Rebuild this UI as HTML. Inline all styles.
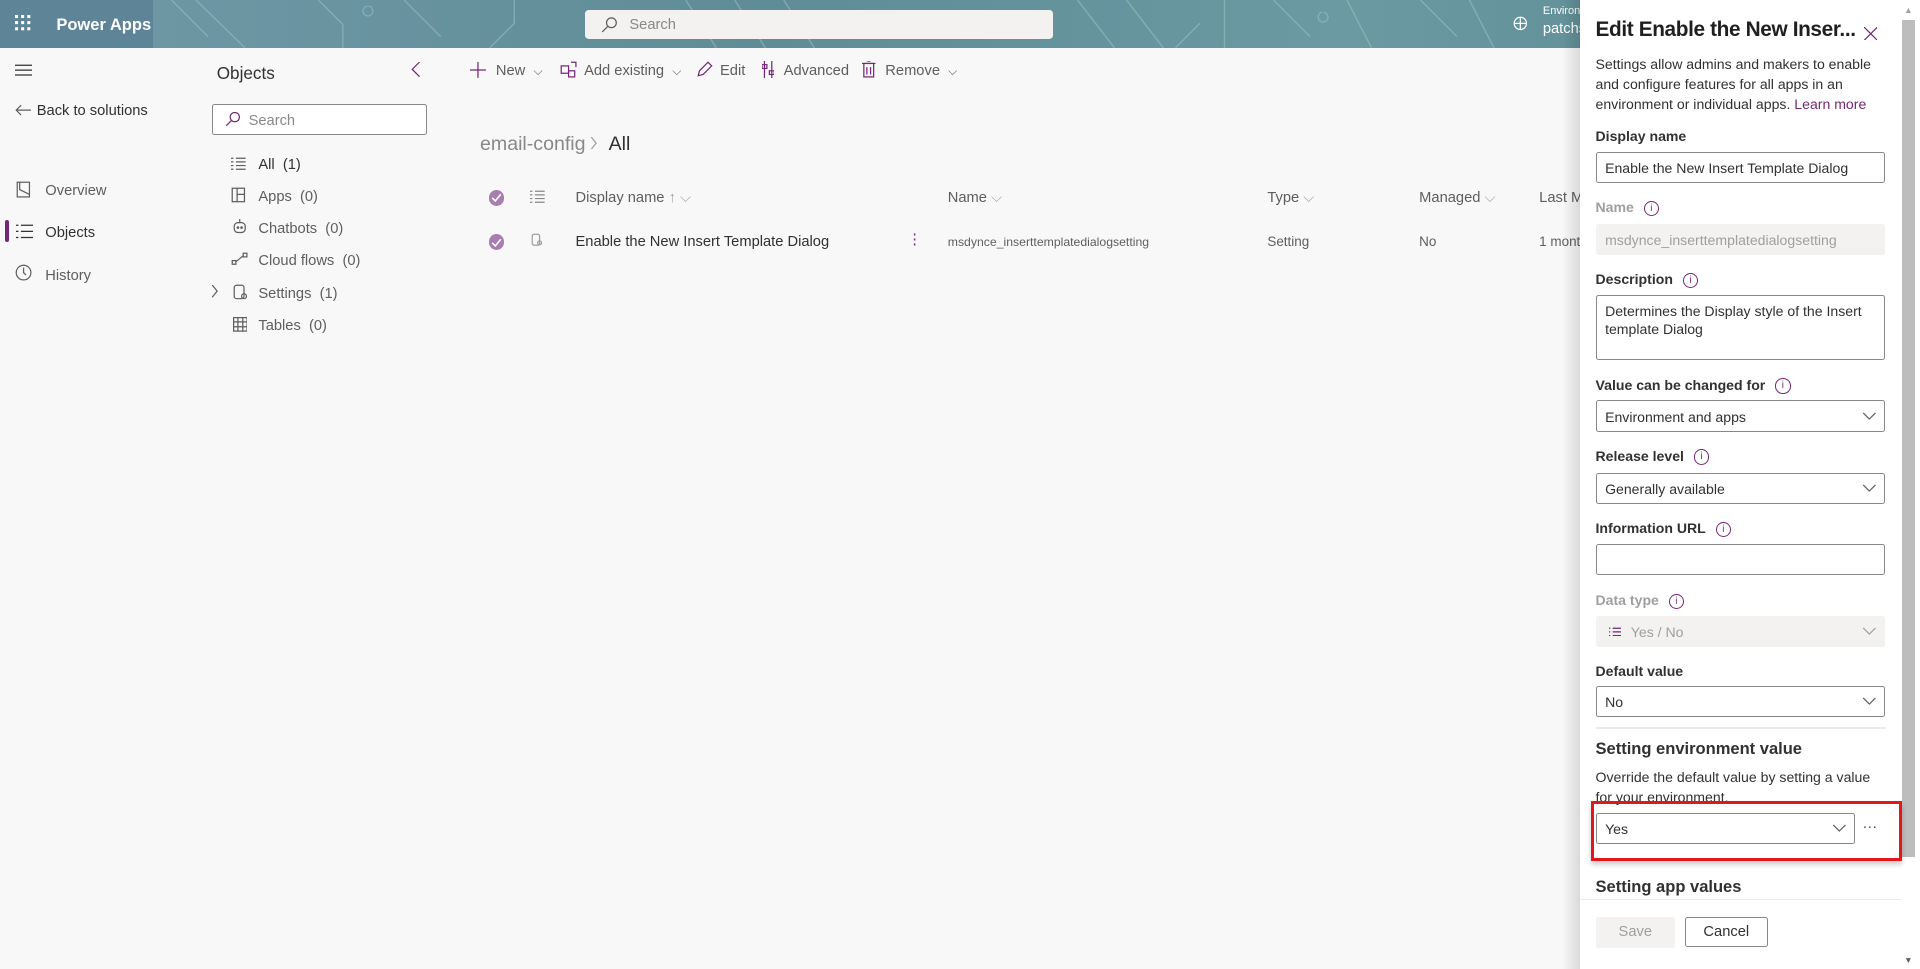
<!DOCTYPE html>
<html><head><meta charset="utf-8"><style>
html,body{margin:0;padding:0;overflow:hidden;background:#f8f8f8}
#root{zoom:1.22449;width:1568px;height:791px;position:relative;font-family:"Segoe UI","Liberation Sans",sans-serif;color:#323130;font-size:12px;background:#f8f8f8;overflow:hidden}
.a{position:absolute;white-space:nowrap}
.t{margin-top:1.5px}
.top{position:absolute;left:0;top:0;width:1568px;height:39px;background:linear-gradient(90deg,#5d8497 0,#5d8497 125px,#6e97a4 125px,#5e8c97 40%,#6b9aa2 70%,#5a8690 100%)}
.lbl{font-weight:600;font-size:11.5px;color:#323130;margin-top:1.5px}
.box{position:absolute;left:1303px;width:235px;border:1px solid #8a8886;background:#fff;border-radius:2px;height:24px}
.box span{position:absolute;left:7px;top:6px;font-size:11.5px}
.chev{position:absolute;right:6px;top:5px;width:12px;height:12px}
.info{display:inline-block;width:11px;height:11px;border:1px solid #742774;border-radius:50%;font-size:8px;line-height:11px;text-align:center;color:#742774;margin-left:8px;vertical-align:1px;font-weight:400}
.nav{color:#605e5c;font-size:12px;margin-top:1.5px}
.chk{position:absolute;width:13px;height:13px;border-radius:50%;background:#a87db0}
.th{position:absolute;top:155px;color:#605e5c;font-size:12px}
.td{position:absolute;top:191px;color:#605e5c;font-size:11px}
</style></head><body><div id="root">
<div class="top">
<svg class="a" style="left:0;top:0" width="1568" height="39"><g stroke="#9dc0c4" stroke-width="1.2" fill="none" opacity=".55">
<path d="M140 0 L170 30 M160 0 L200 39 M260 0 l20 20 v19 M300 5 a4 4 0 1 0 1 0 M330 0 l30 30 M400 39 l20-20 v-19 M560 0 l25 39 M600 0 l25 39 M640 0 l25 39 M880 0 l30 39 M920 0 l30 39 M960 39 l20-20 M1000 0 v39 M1040 0 l30 30 M1080 10 a4 4 0 1 0 1 0 M1100 0 l20 39 M1160 0 l30 30 M1200 0 l20 39"/></g></svg>
<svg class="a" style="left:12px;top:12px" width="14" height="14" fill="#fff"><rect x="0" y="0" width="2.5" height="2.5"/><rect x="5" y="0" width="2.5" height="2.5"/><rect x="10" y="0" width="2.5" height="2.5"/><rect x="0" y="5" width="2.5" height="2.5"/><rect x="5" y="5" width="2.5" height="2.5"/><rect x="10" y="5" width="2.5" height="2.5"/><rect x="0" y="10" width="2.5" height="2.5"/><rect x="5" y="10" width="2.5" height="2.5"/><rect x="10" y="10" width="2.5" height="2.5"/></svg>
<div class="a" style="left:46px;top:12px;color:#fff;font-weight:600;font-size:13.5px">Power Apps</div>
<div class="a" style="left:478px;top:8px;width:382px;height:24px;background:#f3f2f1;border-radius:3px"></div>
<svg class="a" style="left:491px;top:13px" width="14" height="14" fill="none" stroke="#605e5c"><circle cx="8.5" cy="5.5" r="4"/><path d="M5.5 8.5 L1 13"/></svg>
<div class="a" style="left:514px;top:14px;color:#8a8886;font-size:12px">Search</div>
<svg class="a" style="left:1236px;top:13px" width="12" height="12" fill="none" stroke="#fff"><circle cx="6" cy="6" r="5"/><path d="M1 6h10M6 1v10"/></svg>
<div class="a" style="left:1260px;top:4px;color:#fff;font-size:9px">Environ</div>
<div class="a" style="left:1260px;top:17px;color:#fff;font-size:12px">patchs</div>
</div>
<!-- left nav -->
<svg class="a" style="left:12px;top:52px" width="14" height="10" stroke="#323130"><path d="M0 1h14M0 5h14M0 9h14"/></svg>
<svg class="a" style="left:12px;top:85px" width="13" height="10" fill="none" stroke="#605e5c"><path d="M13 5H1M5 1L1 5l4 4"/></svg>
<div class="a t" style="left:30px;top:83px;color:#323130">Back to solutions</div>
<svg class="a" style="left:13px;top:148px" width="13" height="14" fill="none" stroke="#605e5c"><rect x="1" y="1" width="10" height="12"/><path d="M3 1 v6 l8 4"/></svg>
<div class="a nav" style="left:37px;top:148px">Overview</div>
<div class="a" style="left:4px;top:180px;width:3px;height:18px;background:#742774;border-radius:2px"></div>
<svg class="a" style="left:13px;top:183px" width="14" height="12" stroke="#323130"><path d="M0 1h2M4 1h10M0 6h2M4 6h10M0 11h2M4 11h10"/></svg>
<div class="a t" style="left:37px;top:182px;color:#323130">Objects</div>
<svg class="a" style="left:12px;top:216px" width="14" height="14" fill="none" stroke="#605e5c"><circle cx="7" cy="7" r="6"/><path d="M7 3v4l2 2"/></svg>
<div class="a nav" style="left:37px;top:217px">History</div>
<!-- objects pane -->
<div class="a t" style="left:177px;top:50px;font-size:14px;color:#323130">Objects</div>
<svg class="a" style="left:336px;top:51px" width="8" height="12" fill="none" stroke="#742774"><path d="M7 0L1 6l6 6"/></svg>
<div class="a" style="left:173px;top:85px;width:174px;height:24px;border:1px solid #8a8886;background:#fff;border-radius:2px"></div>
<svg class="a" style="left:184px;top:91px" width="13" height="13" fill="none" stroke="#742774"><circle cx="8" cy="5" r="3.8"/><path d="M5 8 L1 12"/></svg>
<div class="a t" style="left:203px;top:91px;color:#8a8886">Search</div>
<svg class="a" style="left:189px;top:128px" width="12" height="12" stroke="#605e5c"><path d="M0 1h2M4 1h8M0 4h2M4 4h8M0 7h2M4 7h8M0 10h2M4 10h8"/></svg>
<div class="a t" style="left:211px;top:127px;color:#323130">All &nbsp;(1)</div>
<svg class="a" style="left:189px;top:153px" width="12" height="13" fill="none" stroke="#605e5c"><rect x="1" y="1" width="10" height="11"/><path d="M5 1v11M5 6h6"/></svg>
<div class="a nav" style="left:211px;top:153px">Apps &nbsp;(0)</div>
<svg class="a" style="left:190px;top:179px" width="11" height="13" fill="none" stroke="#605e5c"><path d="M5.5 0v3"/><rect x="1" y="3" width="9" height="8" rx="3"/><circle cx="4" cy="7" r=".6"/><circle cx="7" cy="7" r=".6"/></svg>
<div class="a nav" style="left:211px;top:179px">Chatbots &nbsp;(0)</div>
<svg class="a" style="left:189px;top:206px" width="14" height="12" fill="none" stroke="#605e5c"><rect x="1" y="7" width="3" height="3"/><rect x="10" y="1" width="3" height="3"/><path d="M4 8 L10 3"/></svg>
<div class="a nav" style="left:211px;top:205px">Cloud flows &nbsp;(0)</div>
<svg class="a" style="left:172px;top:233px" width="6" height="10" fill="none" stroke="#605e5c"><path d="M1 0l4 5-4 5"/></svg>
<svg class="a" style="left:190px;top:232px" width="12" height="14" fill="none" stroke="#605e5c"><rect x="1" y="1" width="8" height="11" rx="2"/><circle cx="9" cy="10" r="2"/></svg>
<div class="a nav" style="left:211px;top:232px">Settings &nbsp;(1)</div>
<svg class="a" style="left:190px;top:259px" width="12" height="12" fill="none" stroke="#605e5c"><rect x="0.5" y="0.5" width="11" height="11"/><path d="M0 4h12M0 8h12M4 0v12M8 0v12"/></svg>
<div class="a nav" style="left:211px;top:258px">Tables &nbsp;(0)</div>
<!-- toolbar -->
<svg class="a" style="left:384px;top:51px" width="13" height="13" stroke="#742774"><path d="M6.5 0v13M0 6.5h13"/></svg>
<div class="a nav" style="left:405px;top:50px">New &nbsp;<span style="font-size:10px">⌵</span></div>
<svg class="a" style="left:457px;top:50px" width="14" height="14" fill="none" stroke="#742774"><rect x="1" y="4" width="6" height="6"/><rect x="7" y="8" width="5" height="5"/><path d="M9 1h4v4"/></svg>
<div class="a nav" style="left:477px;top:50px">Add existing &nbsp;<span style="font-size:10px">⌵</span></div>
<svg class="a" style="left:569px;top:50px" width="13" height="13" fill="none" stroke="#742774"><path d="M1 12l1-4 7-7 3 3-7 7z"/></svg>
<div class="a nav" style="left:588px;top:50px">Edit</div>
<svg class="a" style="left:622px;top:50px" width="10" height="14" fill="none" stroke="#742774"><path d="M2 0v14M8 0v14"/><rect x="0" y="3" width="4" height="3"/><rect x="6" y="8" width="4" height="3"/></svg>
<div class="a nav" style="left:640px;top:50px">Advanced</div>
<svg class="a" style="left:704px;top:50px" width="11" height="14" fill="none" stroke="#742774"><path d="M0 2h11M4 0h3"/><rect x="1.5" y="2" width="8" height="11"/><path d="M4 5v6M7 5v6"/></svg>
<div class="a nav" style="left:723px;top:50px">Remove &nbsp;<span style="font-size:10px">⌵</span></div>
<!-- breadcrumb -->
<div class="a t" style="left:392px;top:107px;font-size:16px;color:#8a8886;font-weight:300">email-config</div>
<svg class="a" style="left:482px;top:112px" width="6" height="10" fill="none" stroke="#a19f9d"><path d="M1 0l4 5-4 5"/></svg>
<div class="a t" style="left:497px;top:107px;font-size:16px;color:#323130">All</div>
<!-- table -->
<div class="chk" style="left:399px;top:155px"></div><svg class="a" style="left:401px;top:158px" width="9" height="8" fill="none" stroke="#fff" stroke-width="1.3"><path d="M1 4l2.5 2.5L8 1"/></svg>
<svg class="a" style="left:433px;top:155px" width="12" height="12" stroke="#8a8886"><path d="M0 1h2M4 1h8M0 4h2M4 4h8M0 7h2M4 7h8M0 10h2M4 10h8"/></svg>
<div class="th" style="left:470px">Display name <span style="color:#a19f9d">↑ ⌵</span></div>
<div class="th" style="left:774px">Name <span style="color:#a19f9d">⌵</span></div>
<div class="th" style="left:1035px">Type <span style="color:#a19f9d">⌵</span></div>
<div class="th" style="left:1159px">Managed <span style="color:#a19f9d">⌵</span></div>
<div class="th" style="left:1257px">Last M</div>
<div class="chk" style="left:399px;top:191px"></div><svg class="a" style="left:401px;top:194px" width="9" height="8" fill="none" stroke="#fff" stroke-width="1.3"><path d="M1 4l2.5 2.5L8 1"/></svg>
<svg class="a" style="left:434px;top:190px" width="10" height="12" fill="none" stroke="#a19f9d"><rect x="1" y="1" width="6" height="9" rx="1.5"/><circle cx="7" cy="8" r="1.6"/></svg>
<div class="a" style="left:470px;top:191px;font-size:12px;color:#323130">Enable the New Insert Template Dialog</div>
<div class="a" style="left:741px;top:189px;color:#742774">⋮</div>
<div class="td" style="left:774px;font-size:10px;top:192px">msdynce_inserttemplatedialogsetting</div>
<div class="td" style="left:1035px">Setting</div>
<div class="td" style="left:1159px">No</div>
<div class="td" style="left:1257px">1 month</div>
<!-- panel -->
<div class="a" style="left:1276px;top:0;width:14px;height:791px;background:linear-gradient(90deg,rgba(0,0,0,0),rgba(0,0,0,.12))"></div>
<div class="a" style="left:1290px;top:0;width:278px;height:791px;background:#fff"></div>
<div class="a" style="left:1553px;top:16px;width:11px;height:684px;background:#bdbdbd"></div>
<div class="a" style="left:1555px;top:4px;font-size:7px;color:#a0a0a0">▲</div>
<div class="a" style="left:1555px;top:780px;font-size:7px;color:#606060">▼</div>
<div class="a" style="left:1303px;top:15px;font-size:17px;font-weight:600;color:#201f1e;letter-spacing:-0.3px">Edit Enable the New Inser...</div>
<svg class="a" style="left:1522px;top:22px" width="11" height="11" stroke="#742774"><path d="M0 0L11 11M11 0L0 11"/></svg>
<div class="a" style="left:1303px;top:44px;font-size:11.5px;line-height:16.5px;white-space:normal;width:240px;color:#323130">Settings allow admins and makers to enable and configure features for all apps in an environment or individual apps. <span style="color:#742774">Learn more</span></div>
<div class="a lbl" style="left:1303px;top:103px">Display name</div>
<div class="box" style="top:124px"><span>Enable the New Insert Template Dialog</span></div>
<div class="a lbl" style="left:1303px;top:161px;color:#a19f9d">Name<span class="info">i</span></div>
<div class="box" style="top:183px;border-color:#f3f2f1;background:#f3f2f1"><span style="color:#a19f9d">msdynce_inserttemplatedialogsetting</span></div>
<div class="a lbl" style="left:1303px;top:220px">Description<span class="info">i</span></div>
<div class="box" style="top:241px;height:51px"><span style="white-space:normal;width:220px;line-height:14px">Determines the Display style of the Insert template Dialog</span></div>
<div class="a lbl" style="left:1303px;top:306px">Value can be changed for<span class="info">i</span></div>
<div class="box" style="top:327px"><span>Environment and apps</span><svg class="chev" stroke="#605e5c" fill="none"><path d="M1 4l5 5 5-5"/></svg></div>
<div class="a lbl" style="left:1303px;top:364px">Release level<span class="info">i</span></div>
<div class="box" style="top:386px"><span>Generally available</span><svg class="chev" stroke="#605e5c" fill="none"><path d="M1 4l5 5 5-5"/></svg></div>
<div class="a lbl" style="left:1303px;top:423px">Information URL<span class="info">i</span></div>
<div class="box" style="top:444px"></div>
<div class="a lbl" style="left:1303px;top:482px;color:#a19f9d">Data type<span class="info">i</span></div>
<div class="box" style="top:503px;border-color:#f3f2f1;background:#f3f2f1"><svg class="a" style="left:10px;top:8px" width="10" height="8" stroke="#742774"><path d="M0 1h1M3 1h7M0 4h1M3 4h7M0 7h1M3 7h7"/></svg><span style="left:28px;color:#a19f9d">Yes / No</span><svg class="chev" stroke="#a19f9d" fill="none"><path d="M1 4l5 5 5-5"/></svg></div>
<div class="a lbl" style="left:1303px;top:540px">Default value</div>
<div class="box" style="top:560px"><span>No</span><svg class="chev" stroke="#605e5c" fill="none"><path d="M1 4l5 5 5-5"/></svg></div>
<div class="a" style="left:1303px;top:594px;width:237px;height:1px;background:#edebe9"></div>
<div class="a t" style="left:1303px;top:602px;font-size:13.5px;font-weight:600;color:#323130">Setting environment value</div>
<div class="a" style="left:1303px;top:626px;font-size:11.5px;line-height:16.5px;white-space:normal;width:240px">Override the default value by setting a value for your environment.</div>
<div class="a" style="left:1299px;top:654px;width:249px;height:44px;border:2.5px solid #e3161b;box-shadow:0 3px 4px rgba(0,0,0,.2)"></div>
<div class="box" style="top:664px;width:210px"><span>Yes</span><svg class="chev" stroke="#605e5c" fill="none"><path d="M1 4l5 5 5-5"/></svg></div>
<div class="a" style="left:1521px;top:669px;color:#742774;font-size:12px">···</div>
<div class="a t" style="left:1303px;top:715px;font-size:13.5px;font-weight:600;color:#323130">Setting app values</div>
<div class="a" style="left:1290px;top:734px;width:263px;height:1px;background:#edebe9"></div>
<div class="a" style="left:1303px;top:749px;width:65px;height:25px;background:#f3f2f1;border-radius:2px;color:#a19f9d;text-align:center;line-height:26px">Save</div>
<div class="a" style="left:1376px;top:749px;width:66px;height:23px;border:1px solid #8a8886;border-radius:2px;text-align:center;line-height:24px">Cancel</div>
</div></body></html>
